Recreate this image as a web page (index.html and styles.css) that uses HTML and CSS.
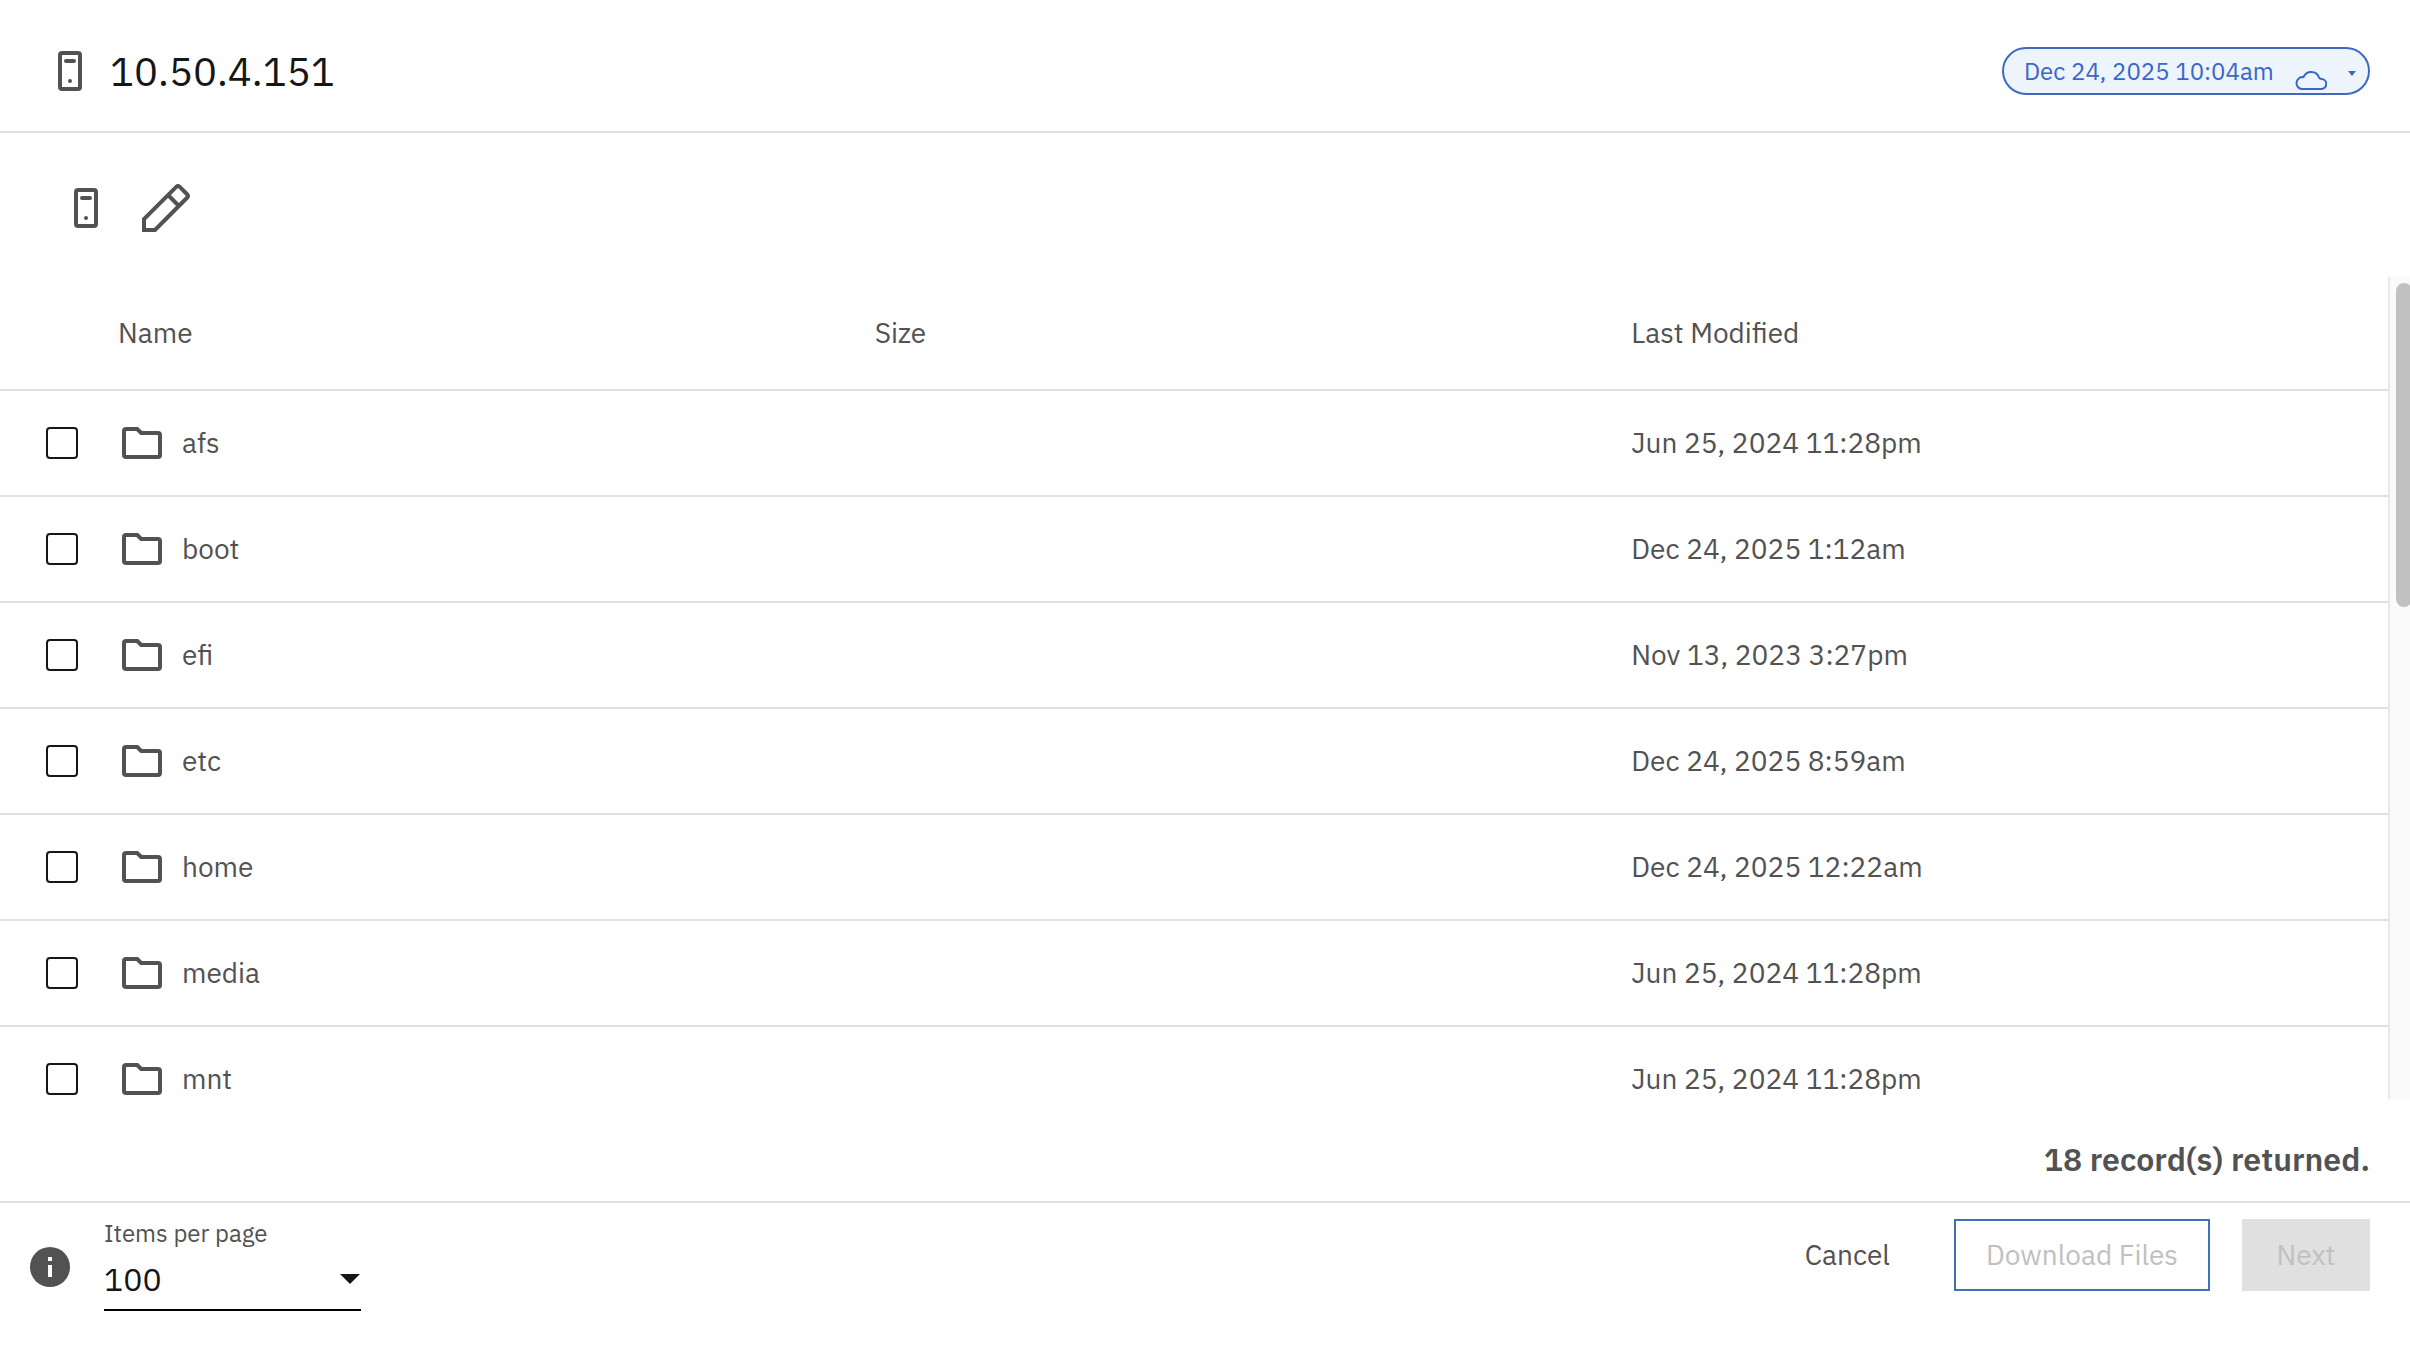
FILE: index.html
```html
<!DOCTYPE html>
<html lang="en">
<head>
<meta charset="utf-8">
<meta name="viewport" content="width=device-width, initial-scale=1">
<title>10.50.4.151</title>
<link rel="stylesheet" href="styles.css">
</head>
<body>
<svg class="symbols" aria-hidden="true">
  <symbol id="server" viewBox="0 0 24 24">
    <rect x="7" y="3" width="10" height="18" rx="1" fill="none" stroke="currentColor" stroke-width="2"/>
    <path d="M10 7h4" stroke="currentColor" stroke-width="2" stroke-linecap="round"/>
    <circle cx="12" cy="17" r="1" fill="currentColor"/>
  </symbol>
  <symbol id="folder" viewBox="0 0 24 24">
    <path d="M4 5h5.6l2 2H20a1 1 0 0 1 1 1v10a1 1 0 0 1-1 1H4a1 1 0 0 1-1-1V6a1 1 0 0 1 1-1z" fill="none" stroke="currentColor" stroke-width="2"/>
  </symbol>
</svg>

<header class="header">
  <svg class="icon" aria-hidden="true"><use href="#server"/></svg>
  <h1 class="title">10.50.4.151</h1>
  <button class="snapshot" type="button">
    <span>Dec 24, 2025 10:04am</span>
    <svg class="cloud" viewBox="0 0 32 20" aria-hidden="true"><path d="M6.500 19h19.500a5 5 0 0 0 .5-10 3 3 0 0 1-2.500-1.500A8.300 8.300 0 0 0 8.500 7.200 5.900 5.900 0 0 0 6.500 19z" fill="none" stroke="currentColor" stroke-width="2" stroke-linejoin="round"/></svg>
    <svg class="snapshot-caret" viewBox="0 0 8 5" aria-hidden="true"><path d="M0 0h8L4 5z" fill="currentColor"/></svg>
  </button>
</header>

<main class="main">
  <nav class="toolbar" aria-label="Tools">
    <button class="tool" type="button" aria-label="Server"><svg class="icon" aria-hidden="true"><use href="#server"/></svg></button>
    <button class="tool" type="button" aria-label="Edit">
      <svg class="pencil" viewBox="0 0 48 48" aria-hidden="true" fill="none" stroke="currentColor" stroke-width="4"><path d="M2 46V35L34.500 2.700q1.500-1.400 3 0l7.800 7.800q1.400 1.500 0 3L13 46zM26 11l11 11"/></svg>
    </button>
  </nav>

  <section class="files">
    <div class="viewport">
      <table class="table">
        <thead>
          <tr><td class="check"></td><th scope="col">Name</th><th scope="col">Size</th><th scope="col">Last Modified</th></tr>
        </thead>
        <tbody>
          <tr><td class="check"><input type="checkbox" id="afs"></td><td><label class="name" for="afs"><svg class="icon" aria-hidden="true"><use href="#folder"/></svg>afs</label></td><td></td><td>Jun 25, 2024 11:28pm</td></tr>
          <tr><td class="check"><input type="checkbox" id="boot"></td><td><label class="name" for="boot"><svg class="icon" aria-hidden="true"><use href="#folder"/></svg>boot</label></td><td></td><td>Dec 24, 2025 1:12am</td></tr>
          <tr><td class="check"><input type="checkbox" id="efi"></td><td><label class="name" for="efi"><svg class="icon" aria-hidden="true"><use href="#folder"/></svg>efi</label></td><td></td><td>Nov 13, 2023 3:27pm</td></tr>
          <tr><td class="check"><input type="checkbox" id="etc"></td><td><label class="name" for="etc"><svg class="icon" aria-hidden="true"><use href="#folder"/></svg>etc</label></td><td></td><td>Dec 24, 2025 8:59am</td></tr>
          <tr><td class="check"><input type="checkbox" id="home"></td><td><label class="name" for="home"><svg class="icon" aria-hidden="true"><use href="#folder"/></svg>home</label></td><td></td><td>Dec 24, 2025 12:22am</td></tr>
          <tr><td class="check"><input type="checkbox" id="media"></td><td><label class="name" for="media"><svg class="icon" aria-hidden="true"><use href="#folder"/></svg>media</label></td><td></td><td>Jun 25, 2024 11:28pm</td></tr>
          <tr><td class="check"><input type="checkbox" id="mnt"></td><td><label class="name" for="mnt"><svg class="icon" aria-hidden="true"><use href="#folder"/></svg>mnt</label></td><td></td><td>Jun 25, 2024 11:28pm</td></tr>
        </tbody>
      </table>
    </div>
    <div class="scrollbar" aria-hidden="true"><div class="thumb"></div></div>
  </section>
  <p class="records">18 record(s) returned.</p>
</main>

<footer class="footer">
  <svg class="info" viewBox="0 0 40 40" role="img" aria-label="Information"><circle cx="20" cy="20" r="20" fill="currentColor"/><path d="M18 10h4v4h-4zM18 18h4v12h-4z" fill="#fff"/></svg>
  <div class="paging">
    <label class="paging-label" for="page-size">Items per page</label>
    <div class="select">
      <select id="page-size"><option>100</option></select>
      <svg class="select-caret" viewBox="0 0 20 10" aria-hidden="true"><path d="M0 0h20L10 10z" fill="currentColor"/></svg>
    </div>
  </div>
  <div class="actions">
    <button class="button" type="button">Cancel</button>
    <button class="button button-outline" type="button" disabled>Download Files</button>
    <button class="button button-primary" type="button" disabled>Next</button>
  </div>
</footer>
</body>
</html>
```
FILE: styles.css
```css
* {
  box-sizing: border-box;
}

body {
  display: flex;
  flex-direction: column;
  height: 100vh;
  margin: 0;
  background: #fff;
  color: #525252;
  font-family: "IBM Plex Sans", "Noto Sans", sans-serif;
  font-size: 28px;
  line-height: 36px;
}

button,
select {
  margin: 0;
  padding: 0;
  border: 0;
  background: none;
  color: inherit;
  font: inherit;
}

svg {
  flex: none;
}

.symbols {
  display: none;
}

.icon {
  display: block;
  width: 48px;
  height: 48px;
}

.header {
  display: flex;
  align-items: center;
  gap: 16px;
  padding: 43px 40px 32px 46px;
  border-bottom: 2px solid #e0e0e0;
}

.title {
  margin: 0;
  color: #161616;
  font-size: 40px;
  font-weight: 400;
  line-height: 56px;
}

.snapshot {
  display: flex;
  align-items: center;
  justify-content: space-between;
  width: 368px;
  height: 48px;
  margin-left: auto;
  padding: 0 12px 0 20px;
  border: 2px solid #3f69c0;
  border-radius: 24px;
  background: #edf4fc;
  color: #3a66c8;
  font-size: 24px;
  line-height: 32px;
}

.cloud {
  width: 32px;
  height: 20px;
  margin-top: 18px;
}

.snapshot-caret {
  width: 8px;
  height: 5px;
  margin-top: 4px;
}

.main {
  display: flex;
  flex: 1;
  flex-direction: column;
  min-height: 0;
}

.toolbar {
  display: flex;
  align-items: center;
  gap: 32px;
  padding: 51px 62px 45px;
}

.tool {
  display: grid;
  place-items: center;
  width: 48px;
  height: 48px;
}

.pencil {
  width: 48px;
  height: 48px;
}

.files {
  display: flex;
  flex: 1;
  min-height: 0;
}

.viewport {
  flex: 1;
  overflow: hidden;
}

.table {
  width: 100%;
  table-layout: fixed;
  border-collapse: separate;
  border-spacing: 0;
}

.table th,
.table td {
  height: 106px;
  padding: 0;
  border-bottom: 2px solid #e0e0e0;
  font-weight: 400;
  text-align: left;
}

.table thead th,
.table thead td {
  height: 114px;
}

.table .check {
  width: 118px;
  padding-left: 46px;
}

.check input {
  display: block;
  width: 32px;
  height: 32px;
  margin: 0;
  border: 2px solid #161616;
  border-radius: 4px;
  appearance: none;
}

.name {
  display: flex;
  align-items: center;
  gap: 16px;
}

.scrollbar {
  width: 22px;
  padding: 6px 0 6px 6px;
  border-left: 2px solid #e8e8e8;
  background: #fafafa;
  overflow: hidden;
}

.thumb {
  width: 16px;
  height: 40%;
  border-radius: 8px;
  background: #c1c1c1;
}

.records {
  margin: 0;
  padding: 40px 40px 22px;
  font-size: 32px;
  font-weight: 600;
  line-height: 40px;
  text-align: right;
}

.footer {
  display: flex;
  align-items: flex-start;
  padding: 14px 40px 53px 30px;
  border-top: 2px solid #e0e0e0;
}

.info {
  width: 40px;
  height: 40px;
  margin-top: 30px;
}

.paging {
  width: 257px;
  margin-left: 34px;
}

.paging-label {
  display: block;
  font-size: 24px;
  line-height: 32px;
}

.select {
  display: grid;
  align-items: center;
  height: 62px;
  border-bottom: 2px solid #000;
  color: #161616;
}

.select select,
.select-caret {
  grid-area: 1 / 1;
}

.select select {
  width: 100%;
  font-size: 32px;
  line-height: 40px;
  appearance: none;
}

.select-caret {
  justify-self: end;
  width: 20px;
  height: 10px;
  margin-right: 1px;
  pointer-events: none;
}

.actions {
  display: flex;
  gap: 32px;
  margin: 2px 0 0 auto;
}

.button {
  height: 72px;
  padding: 0 32px;
}

.button-outline {
  padding: 0 30px;
  border: 2px solid #4070b8;
  color: #c0c0c0;
}

.button-primary {
  width: 128px;
  background: #e0e0e0;
  color: #c0c0c0;
}
```
